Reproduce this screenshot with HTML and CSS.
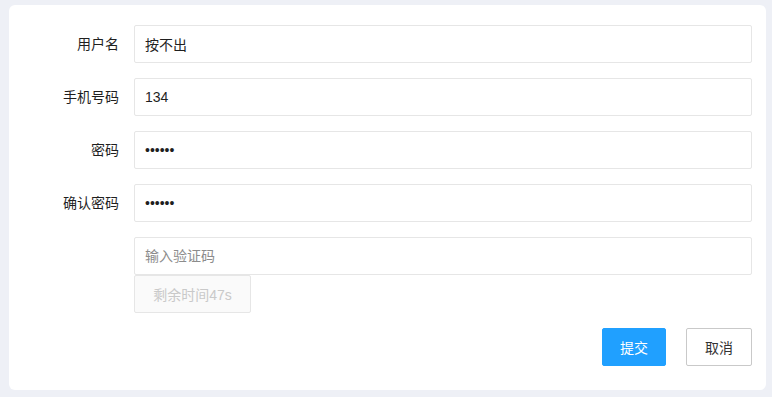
FILE: index.html
```html
<!DOCTYPE html>
<html lang="zh">
<head>
  <meta charset="UTF-8" />
  <title>注册</title>
  <link rel="stylesheet" href="styles.css">
</head>
<body>
  <div class="card">
    <form class="form">
      <div class="form-item">
        <label class="form-label">用户名</label>
        <div class="form-content">
          <input class="input" type="text" value="按不出" />
        </div>
      </div>

      <div class="form-item">
        <label class="form-label">手机号码</label>
        <div class="form-content">
          <input class="input" type="text" value="134" />
        </div>
      </div>

      <div class="form-item">
        <label class="form-label">密码</label>
        <div class="form-content">
          <input class="input" type="password" value="123456" />
        </div>
      </div>

      <div class="form-item">
        <label class="form-label">确认密码</label>
        <div class="form-content">
          <input class="input" type="password" value="123456" />
        </div>
      </div>

      <div class="form-item">
        <label class="form-label"></label>
        <div class="form-content">
          <input class="input" type="text" placeholder="输入验证码" />
          <button type="button" class="btn btn-code" disabled>剩余时间47s</button>
        </div>
      </div>

      <div class="form-actions">
        <button type="button" class="btn btn-primary">提交</button>
        <button type="button" class="btn btn-default">取消</button>
      </div>
    </form>
  </div>
</body>
</html>
```

FILE: styles.css
```css
body {
  margin: 0;
  padding: 5px 6px 7px 9px;
  background: #eef0f6;
  font-family: "Liberation Sans", Arial, "Noto Sans CJK SC", sans-serif;
  font-size: 14px;
  color: #1f1f1f;
}

.card {
  background: #fff;
  border-radius: 6px;
  padding: 20px 14px 24px 0;
}

.form-item {
  display: flex;
  margin-bottom: 15px;
}

.form-label {
  width: 125px;
  flex-shrink: 0;
  box-sizing: border-box;
  padding-right: 15px;
  text-align: right;
  line-height: 38px;
  color: #1f1f1f;
}

.form-content {
  flex: 1;
  display: flex;
  flex-direction: column;
  align-items: flex-start;
}

.input {
  width: 100%;
  height: 38px;
  box-sizing: border-box;
  border: 1px solid #e6e6e6;
  border-radius: 2px;
  padding: 0 10px;
  font-family: inherit;
  font-size: 14px;
  color: #1f1f1f;
  outline: none;
}

.input::placeholder {
  color: #8c8c8c;
}

.btn {
  height: 38px;
  box-sizing: border-box;
  border-radius: 2px;
  font-family: inherit;
  font-size: 14px;
  cursor: pointer;
}

.btn-code {
  width: 117px;
  margin-top: 0;
  background: #fafafa;
  border: 1px solid #e6e6e6;
  color: #c9c9c9;
  cursor: not-allowed;
}

.form-actions {
  display: flex;
  justify-content: flex-end;
  gap: 20px;
}

.btn-primary {
  width: 64px;
  background: #20a0ff;
  border: 1px solid #20a0ff;
  color: #fff;
}

.btn-default {
  width: 66px;
  background: #fff;
  border: 1px solid #c9c9c9;
  color: #333;
}
```
